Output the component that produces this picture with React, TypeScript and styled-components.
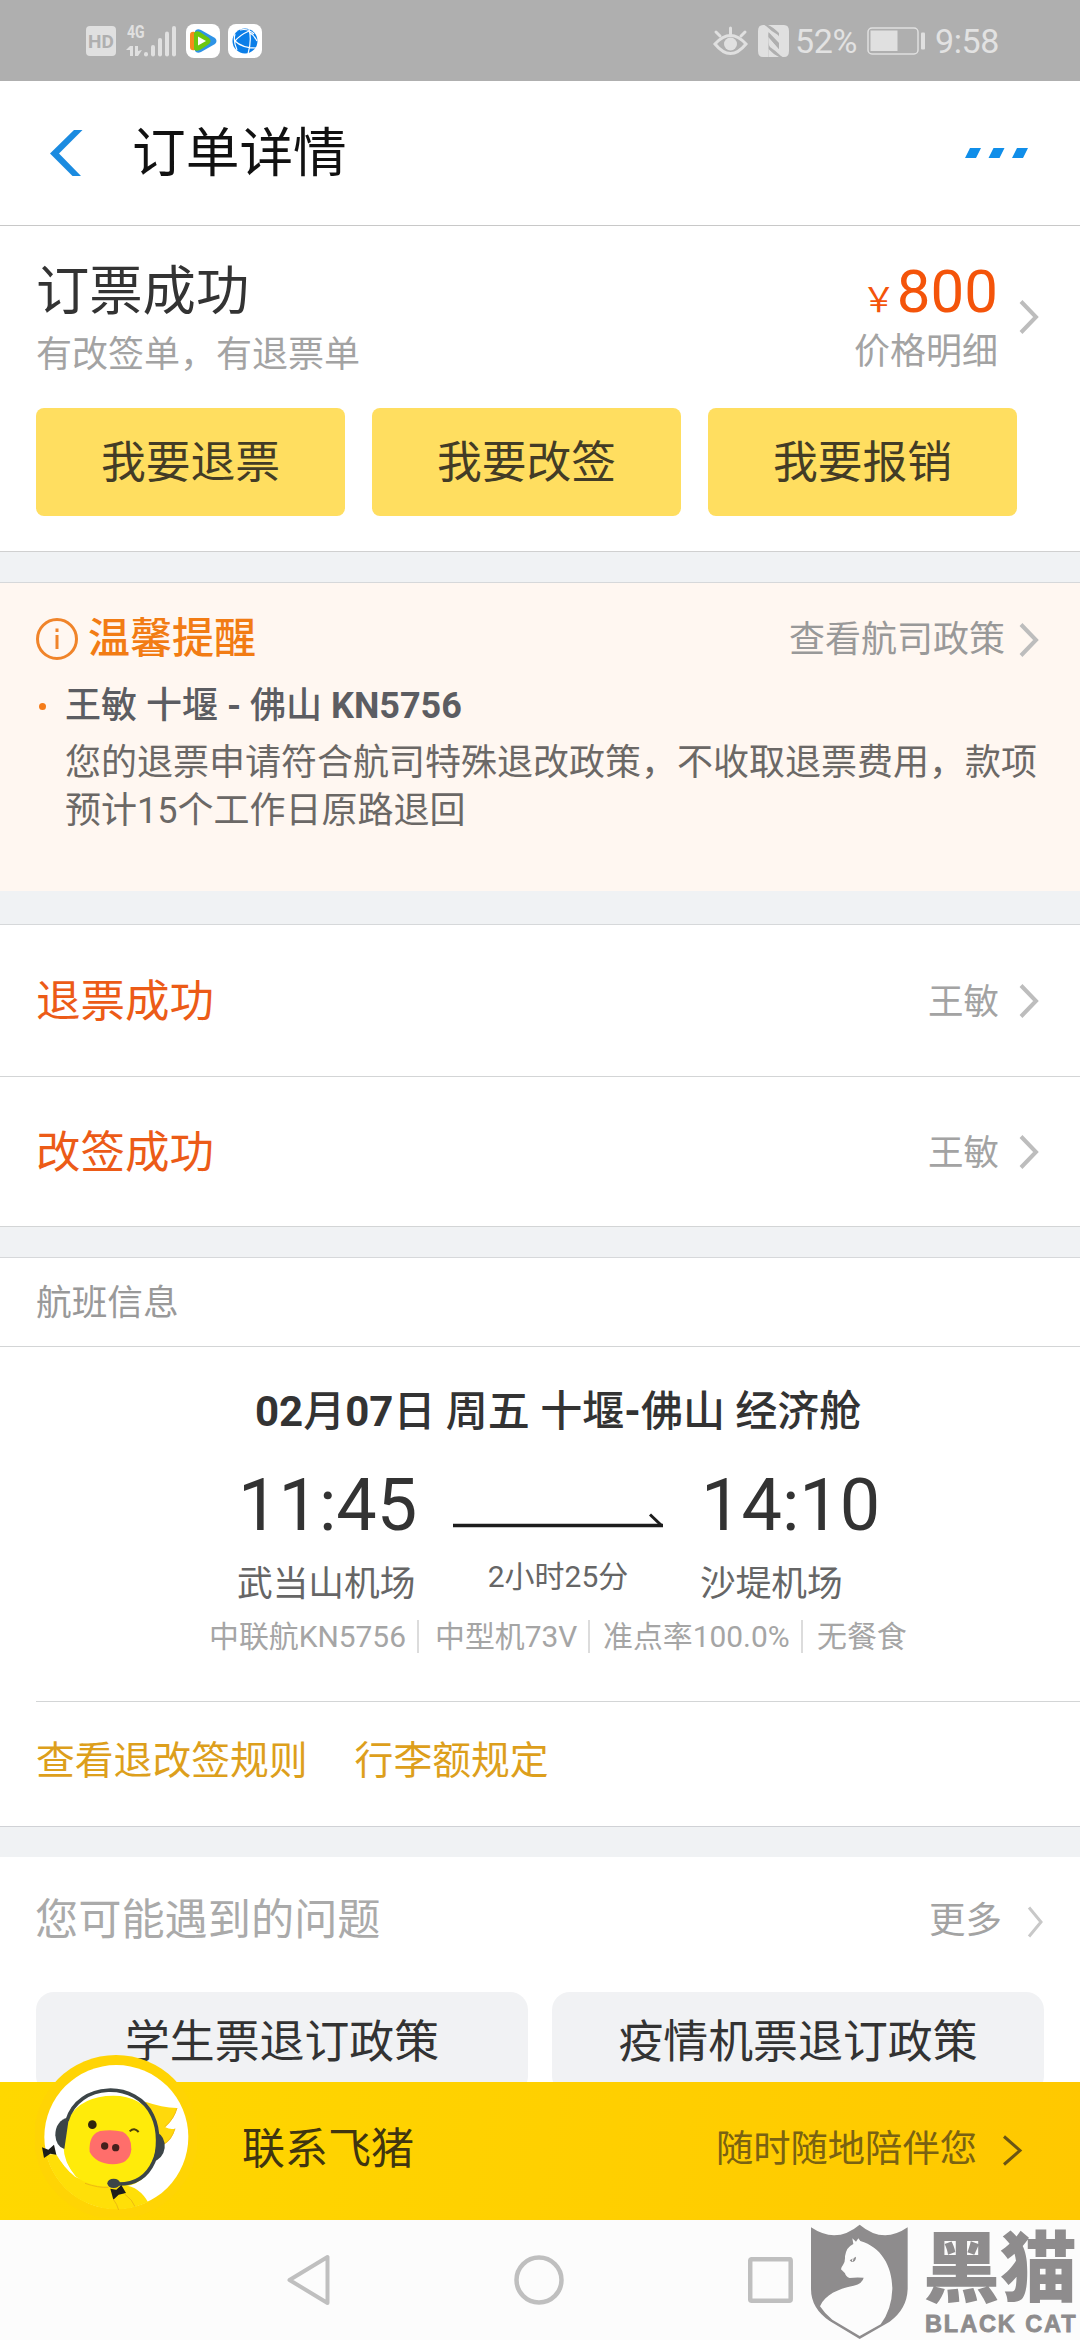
import React from "react";
import styled, { createGlobalStyle } from "styled-components";

const GlobalStyle = createGlobalStyle`
  * { box-sizing: border-box; }
  html, body { margin: 0; padding: 0; background: #fff; }
  body {
    font-family: Roboto, "Noto Sans CJK SC", sans-serif;
    color: #333;
    -webkit-font-smoothing: antialiased;
  }
`;

const Screen = styled.div`
  width: 1080px;
  height: 2340px;
  overflow: hidden;
  display: flex;
  flex-direction: column;
  background: #fff;
`;

const Text = styled.span<{ $size: number; $color?: string; $weight?: number; $lh?: number; $drop?: number }>`
  font-size: ${(p) => p.$size}px;
  line-height: ${(p) => p.$lh ?? Math.round(p.$size * 1.4)}px;
  color: ${(p) => p.$color ?? "#333"};
  font-weight: ${(p) => p.$weight ?? 400};
  padding-top: ${(p) => p.$drop ?? 0}px;
  white-space: nowrap;
  b { font-weight: 700; }
`;

/* Status bar */
const StatusBar = styled.header`
  flex: none;
  height: 81px;
  background: #afafaf;
  display: flex;
  align-items: center;
  justify-content: space-between;
  padding: 0 81px 0 86px;
`;
const StatusGroup = styled.div`
  display: flex;
  align-items: center;
  height: 100%;
`;
const HdBadge = styled.span`
  width: 30px;
  height: 30px;
  border-radius: 4px;
  background: #e0e0e0;
  color: #afafaf;
  font: 700 19px/31px Roboto, sans-serif;
  text-align: center;
  margin-right: 10px;
`;
const AppBadge = styled.span<{ $gap: number }>`
  display: flex;
  width: 34px;
  height: 34px;
  border-radius: 8px;
  background: #fff;
  margin-left: ${(p) => p.$gap}px;
`;
const Signal = styled.span`
  position: relative;
  width: 50px;
  height: 34px;
  svg { display: block; }
`;
const NetLabel = styled.span`
  position: absolute;
  left: 1px;
  top: -1px;
  font: 700 18px/18px Roboto, sans-serif;
  transform: scaleX(0.78);
  transform-origin: 0 0;
  color: #e0e0e0;
`;
const StatusText = styled.span<{ $width: number; $left: number }>`
  width: ${(p) => p.$width}px;
  margin-left: ${(p) => p.$left}px;
  font: 400 34px/40px Roboto, sans-serif;
  color: #e2e2e2;
  letter-spacing: -0.4px;
  white-space: nowrap;
`;

/* Title bar */
const TitleBar = styled.div`
  flex: none;
  height: 145px;
  border-bottom: 1px solid #c8c8c8;
  display: flex;
  align-items: center;
  padding: 0 52px 0 50px;
`;
const PageTitle = styled.h1`
  margin: 2px auto 0 49px;
  font-size: 53.7px;
  line-height: 76px;
  font-weight: 400;
  color: #111;
`;

/* Sections */
const Gap = styled.div<{ $h: number; $line?: boolean }>`
  flex: none;
  height: ${(p) => p.$h}px;
  background: #f0f2f4;
  border-bottom: ${(p) => (p.$line ? "1px solid #d6d8da" : "none")};
`;
const Row = styled.div`
  display: flex;
  align-items: center;
  justify-content: space-between;
`;
const Arrow = styled.span<{ $ml: number; $drop?: number }>`
  display: flex;
  margin-left: ${(p) => p.$ml}px;
  padding-top: ${(p) => p.$drop ?? 0}px;
`;
const Summary = styled.section`
  flex: none;
  height: 326px;
  padding: 26px 41px 0 36px;
  border-bottom: 1px solid #d0d0d0;
`;
const SummaryRow = styled(Row)`
  height: 130px;
`;
const Stack = styled.div<{ $end?: boolean }>`
  display: flex;
  flex-direction: column;
  align-items: ${(p) => (p.$end ? "flex-end" : "flex-start")};
  padding-bottom: ${(p) => (p.$end ? 6 : 0)}px;
`;
const Price = styled.div`
  display: flex;
  align-items: baseline;
  height: 76px;
  color: #f4540a;
  font-size: 60px;
  line-height: 78px;
`;
const Yen = styled.span`
  font-family: "Noto Sans CJK SC", sans-serif;
  font-size: 34px;
  line-height: 34px;
  margin-right: 1px;
`;
const Buttons = styled.div`
  display: flex;
  gap: 27px;
  margin-top: 26px;
`;
const ActionButton = styled.button`
  width: 309px;
  height: 108px;
  border: 0;
  padding: 0;
  border-radius: 8px;
  background: #ffde60;
  font: 400 44.8px/110px Roboto, "Noto Sans CJK SC", sans-serif;
  color: #433c26;
`;

/* Notice */
const Notice = styled.section`
  flex: none;
  height: 308px;
  padding: 27px 41px 0 36px;
  background: #fff7f1;
`;
const NoticeHead = styled(Row)`
  height: 58px;
`;
const Inline = styled.div`
  display: flex;
  align-items: center;
`;
const NoticeItem = styled.div`
  display: flex;
  align-items: center;
  height: 50px;
  margin-top: 13px;
`;
const Bullet = styled.i`
  width: 7px;
  height: 7px;
  border-radius: 50%;
  background: #f57c1a;
  margin: 0 19px 0 3px;
`;
const NoticeBody = styled.p`
  margin: 8px 0 0 29px;
  width: 975px;
  font-size: 36px;
  line-height: 48px;
  color: #6b6866;
`;

/* List rows */
const ListRow = styled(Row)<{ $h: number }>`
  flex: none;
  height: ${(p) => p.$h}px;
  padding: 0 41px 0 36px;
  border-bottom: 1px solid #d3d5d6;
`;

/* Flight */
const Flight = styled.section`
  flex: none;
  height: 355px;
  margin-left: 36px;
  border-bottom: 1px solid #d3d5d6;
`;
const FlightTitle = styled.h2`
  margin: 0 0 0 219px;
  padding-top: 35px;
  font-size: 42px;
  line-height: 60px;
  font-weight: 500;
  color: #333;
  white-space: nowrap;
  b { font-weight: 700; }
`;
const Legs = styled.div`
  display: grid;
  grid-template-columns: 216px 247px 200px;
  margin: 21px 0 0 201px;
`;
const Time = styled.div`
  font-size: 72px;
  line-height: 86px;
  color: #333;
  padding-left: 1px;
`;
const Airport = styled.div`
  font-size: 35.7px;
  line-height: 50px;
  color: #666;
  margin-top: 10px;
`;
const Path = styled.div`
  padding-top: 50px;
  svg { display: block; }
`;
const Duration = styled.div`
  width: 210px;
  margin-top: 26px;
  text-align: center;
  font-size: 30px;
  line-height: 44px;
  color: #666;
`;
const Facts = styled.ul`
  display: flex;
  list-style: none;
  margin: 5px 0 0 173px;
  padding: 0;
  height: 44px;
  align-items: center;
`;
const Fact = styled.li<{ $w: number; $l: number; $first?: boolean }>`
  width: ${(p) => p.$w}px;
  padding-left: ${(p) => p.$l}px;
  border-left: ${(p) => (p.$first ? "none" : "2px solid #dcdcdc")};
  font-size: 29.9px;
  line-height: 33px;
  color: #a5a5a5;
  white-space: nowrap;
`;
const Links = styled.div`
  flex: none;
  height: 125px;
  display: flex;
  gap: 47px;
  padding: 0 0 7px 36px;
  align-items: center;
  border-bottom: 1px solid #d0d2d6;
`;

/* FAQ */
const Faq = styled.section`
  flex: none;
  height: 225px;
  overflow: hidden;
`;
const FaqHead = styled(Row)`
  height: 135px;
  padding: 0 36px 8px 35px;
`;
const FaqGrid = styled.div`
  display: grid;
  grid-template-columns: 1fr 1fr;
  gap: 24px;
  padding: 0 36px;
`;
const FaqCard = styled.div`
  height: 102px;
  border-radius: 18px;
  background: #f1f2f4;
  text-align: center;
  font-size: 44.9px;
  line-height: 102px;
  color: #333;
`;

/* Contact bar */
const Contact = styled.div`
  flex: none;
  position: relative;
  height: 138px;
  padding: 0 57px 4px 242px;
  display: flex;
  align-items: center;
  justify-content: space-between;
  background: linear-gradient(100deg, #ffd800, #ffc800);
`;
const Avatar = styled.div`
  position: absolute;
  left: 35px;
  top: -27px;
  width: 162px;
  height: 162px;
`;

/* System navigation */
const NavBar = styled.nav`
  flex: none;
  position: relative;
  height: 120px;
  background: #fcfcfc;
  display: flex;
  align-items: center;
  padding-left: 287px;
  gap: 184px;
`;
const Watermark = styled.div`
  position: absolute;
  left: 811px;
  top: 4px;
  display: flex;
  color: #8e8c8d;
`;
const Brand = styled.div`
  margin-left: 14px;
  width: 155px;
`;
const BrandCn = styled.div`
  font: 900 77px/90px "Liberation Sans", "Noto Sans CJK SC", sans-serif;
  height: 88px;
  white-space: nowrap;
`;
const BrandEn = styled.div`
  font: 700 23.5px/24px "Liberation Sans", sans-serif;
  -webkit-text-stroke: 0.8px #8e8c8d;
  letter-spacing: 1.9px;
  margin-left: 2px;
  white-space: nowrap;
`;

const Chevron = ({ color = "#bdbdbd", w = 20, h = 34, sw = 4 }) => (
  <svg width={w} height={h} viewBox={`0 0 ${w} ${h}`} fill="none">
    <path d={`M2 1.5L${w - 3} ${h / 2}L2 ${h - 1.5}`} stroke={color} strokeWidth={sw} />
  </svg>
);

const SignalIcon = () => (
  <Signal>
    <NetLabel>4G</NetLabel>
    <svg width="50" height="34" viewBox="0 0 50 34" fill="#e0e0e0">
      <path d="M0 26l4-4h3v10H4v-6zM9 22h3v5l4-1-4 6H9z" />
      <rect x="18" y="28" width="4" height="4.500" rx="2" />
      <rect x="25" y="21" width="4" height="11.500" rx="2" />
      <rect x="32" y="14" width="4" height="18.500" rx="2" />
      <rect x="39" y="7.500" width="4" height="25" rx="2" />
      <rect x="46" y="2" width="4" height="30.500" rx="2" />
    </svg>
  </Signal>
);

const VideoIcon = () => (
  <svg width="34" height="34" viewBox="0 0 34 34">
    <path d="M9 7Q11 4 15 6L29 14Q32 17 29 20L15 28Q11 30 9 27Z" fill="#2e93e6" />
    <path d="M4 11Q4 7 9 8L12 9V25L9 26Q4 27 4 23Z" fill="#f58a1c" />
    <path d="M8 9Q10 6 14 8L23 14Q26 17 23 20L14 26Q8 28 8 24Z" fill="#6cc70e" />
    <path d="M12 12.500L20 17L12 21.500Z" fill="#fff" />
  </svg>
);

const GlobeIcon = () => (
  <svg width="34" height="34" viewBox="0 0 34 34" fill="none" stroke="#fff" strokeWidth="1.200">
    <circle cx="17" cy="17" r="12.500" fill="#0a7ee8" stroke="none" />
    <path d="M7 17Q12 11 21 7M7 17Q14 24 28 24M21 5Q24 16 20 30M12 6Q20 4 26 10M7 10Q5 17 9 26M21 8Q26 11 29 17" />
  </svg>
);

const EyeIcon = () => (
  <svg width="35" height="32" viewBox="0 0 35 32" fill="none" stroke="#e0e0e0" strokeWidth="3" strokeLinecap="round">
    <path d="M2 19Q17.500 2 33 19Q17.500 38 2 19Z" />
    <circle cx="17.500" cy="19" r="6.500" fill="#e0e0e0" stroke="none" />
    <path d="M17.500 3v6M3 7l4 4M32 7l-4 4" />
  </svg>
);

const NfcIcon = () => (
  <svg width="31" height="32" viewBox="0 0 31 32" fill="#e0e0e0">
    <path d="M5 0H6.500V32H5Q0 32 0 26V6Q0 0 5 0Z" />
    <path d="M26 32H24.500V0H26Q31 0 31 6V26Q31 32 26 32Z" />
    <path d="M8 1Q13 6 20 10Q22 12 22 15V19L10.500 7V32H6V0Z" />
    <path d="M23 31Q18 26 12 22Q10.500 20 10.500 17V12L21 24V0H25V32Z" />
    <path d="M10.500 8L21 20V24L10.500 12Z" fill="#afafaf" />
    <path d="M10 0H21V8Q15 2 10 0ZM10.500 24Q15 29 21 32H10.500Z" />
  </svg>
);

const BatteryIcon = () => (
  <svg width="58" height="28" viewBox="0 0 58 28">
    <rect x="1" y="1" width="50" height="26" rx="4" fill="none" stroke="#e0e0e0" strokeWidth="1.500" />
    <rect x="3.500" y="3.500" width="27" height="20.500" fill="#e0e0e0" />
    <rect x="54" y="5.500" width="4" height="17" rx="1" fill="#e0e0e0" />
  </svg>
);

const PigIcon = () => (
  <svg width="162" height="162" viewBox="105 75 486 486">
    <defs>
      <clipPath id="disc"><circle cx="349" cy="321" r="217" /></clipPath>
    </defs>
    <circle cx="348" cy="321" r="246" fill="#ffd404" />
    <circle cx="349" cy="321" r="216" fill="#fff" />
    <g clipPath="url(#disc)">
      <path d="M125 375L168 372Q190 410 225 440Q300 475 370 465Q420 470 446 520L400 560H130Z" fill="#ffdf08" />
    </g>
    <path d="M436 215Q485 232 531 234Q524 265 496 292Q511 300 525 296Q516 332 490 344L455 330Z" fill="#ffd90c" />
    <path d="M531 234Q522 268 494 290M525 296Q514 330 492 342" stroke="#f6bd16" strokeWidth="3" fill="none" />
    <path d="M205 265Q245 197 340 197Q425 197 462 265Q485 350 450 420Q415 475 345 470Q270 474 225 438Q192 400 190 345Q192 295 205 265Z" fill="#ffeb0a" />
    <path d="M172 366Q188 415 228 440Q194 400 186 358Z" fill="#fff" />
    <path d="M201 272C235 155 410 150 458 258C478 300 477 365 461 395Q430 465 350 462" fill="none" stroke="#3c4548" strokeWidth="11" />
    <path d="M207 262Q166 272 166 316Q168 350 193 357Z" fill="#3c4548" />
    <path d="M469 306Q497 320 494 354Q490 385 457 397Q474 355 469 306Z" fill="#3c4548" />
    <path d="M300 303Q335 297 368 305Q395 318 394 358Q390 403 338 403Q288 401 269 366Q265 315 300 303Z" fill="#ff6e6b" />
    <circle cx="314" cy="348" r="11" fill="#46201d" />
    <circle cx="347" cy="353" r="11" fill="#46201d" />
    <circle cx="277" cy="284" r="13" fill="#30250d" />
    <path d="M389 304Q403 290 416 306" fill="none" stroke="#4a3e0b" strokeWidth="6" />
    <ellipse cx="341" cy="460" rx="19" ry="14" fill="#3c4548" />
    <path d="M126 352L145 359L162 344L169 374L151 371L132 384ZM331 476L349 479L364 465L378 489L356 494L340 509Z" fill="#1d1d1b" />
    <path d="M340 508Q351 522 356 540M374 492Q398 510 405 530M255 460Q295 474 325 472" fill="none" stroke="#edba11" strokeWidth="3" />
  </svg>
);

const CatShield = () => (
  <svg width="98" height="116" viewBox="94 73 294 348">
    <path d="M94 83Q170 134 240 75Q310 134 384 83V268Q382 328 330 366L240 418L150 364Q94 326 94 268Z" fill="#8e8c8d" />
    <path d="M218 116L229 126L236 116L242 124C305 142 338 200 338 268Q336 330 303 374L240 409L158 360Q135 342 121 320C138 282 178 268 222 258Q249 251 252 234Q228 232 210 235Q198 231 196 221L184 209Q184 203 190 196Q197 186 196 170Q200 142 221 133Z" fill="#fcfcfc" />
    <path d="M210 182L229 171Q229 187 216 187Z" fill="#8e8c8d" />
    <path d="M221 173l-3 12" stroke="#fcfcfc" strokeWidth="3" />
  </svg>
);

const RESULTS = [
  { title: "退票成功", name: "王敏", h: 152 },
  { title: "改签成功", name: "王敏", h: 150 },
];

export default function App() {
  return (
    <>
      <GlobalStyle />
      <Screen>
        <StatusBar>
          <StatusGroup>
            <HdBadge>HD</HdBadge>
            <SignalIcon />
            <AppBadge $gap={10}><VideoIcon /></AppBadge>
            <AppBadge $gap={8}><GlobeIcon /></AppBadge>
          </StatusGroup>
          <StatusGroup>
            <EyeIcon />
            <Arrow $ml={10}><NfcIcon /></Arrow>
            <StatusText $width={64} $left={6}>52%</StatusText>
            <Arrow $ml={8}><BatteryIcon /></Arrow>
            <StatusText $width={64} $left={10}>9:58</StatusText>
          </StatusGroup>
        </StatusBar>

        <TitleBar>
          <svg width="33" height="46" viewBox="0 0 33 46" fill="#1b8be0">
            <path d="M24 0h8.500L9 23.500L31 46h-8.500L0 23.500z" />
          </svg>
          <PageTitle>订单详情</PageTitle>
          <svg width="63" height="10" viewBox="0 0 63 10" fill="#108ee9">
            <path d="M5 0h11l-5 10H0zM28.500 0h11l-5 10h-11zM52 0h11l-5 10H47z" />
          </svg>
        </TitleBar>

        <Summary>
          <SummaryRow>
            <Stack>
              <Text $size={53.3} $lh={76}>订票成功</Text>
              <Text $size={36} $color="#a3a3a3" $lh={50}>有改签单，有退票单</Text>
            </Stack>
            <Inline>
              <Stack $end>
                <Price><Yen>￥</Yen>800</Price>
                <Text $size={36} $color="#a3a3a3" $lh={46}>价格明细</Text>
              </Stack>
              <Arrow $ml={21}><Chevron /></Arrow>
            </Inline>
          </SummaryRow>
          <Buttons>
            <ActionButton>我要退票</ActionButton>
            <ActionButton>我要改签</ActionButton>
            <ActionButton>我要报销</ActionButton>
          </Buttons>
        </Summary>
        <Gap $h={31} $line />

        <Notice>
          <NoticeHead>
            <Inline>
              <svg width="42" height="42" viewBox="0 0 42 42" fill="none" stroke="#f0842a">
                <circle cx="21" cy="21" r="19.500" strokeWidth="3" />
                <path d="M21 17v14M21 10.500v3.500" strokeWidth="3" />
              </svg>
              <Arrow $ml={10}><Text $size={42} $lh={56} $color="#f27c14" $weight={500}>温馨提醒</Text></Arrow>
            </Inline>
            <Inline>
              <Text $size={36} $color="#999" $drop={2}>查看航司政策</Text>
              <Arrow $ml={14} $drop={2}><Chevron /></Arrow>
            </Inline>
          </NoticeHead>
          <NoticeItem>
            <Bullet />
            <Text $size={36} $color="#5c5d62" $weight={500}>王敏 十堰 <b>-</b> 佛山 <b>KN5756</b></Text>
          </NoticeItem>
          <NoticeBody>
            您的退票申请符合航司特殊退改政策，不收取退票费用，款项预计15个工作日原路退回
          </NoticeBody>
        </Notice>
        <Gap $h={34} $line />

        {RESULTS.map((r) => (
          <ListRow key={r.title} $h={r.h}>
            <Text $size={44.5} $color="#ec5b17" $drop={3}>{r.title}</Text>
            <Inline>
              <Text $size={35.5} $color="#a3a3a3" $drop={2}>{r.name}</Text>
              <Arrow $ml={20}><Chevron /></Arrow>
            </Inline>
          </ListRow>
        ))}
        <Gap $h={31} $line />

        <ListRow $h={89}>
          <Text $size={35.7} $color="#999" $drop={2}>航班信息</Text>
        </ListRow>
        <Flight>
          <FlightTitle><b>02</b>月<b>07</b>日 周五 十堰<b>-</b>佛山 经济舱</FlightTitle>
          <Legs>
            <div>
              <Time>11:45</Time>
              <Airport>武当山机场</Airport>
            </div>
            <Path>
              <svg width="210" height="16" viewBox="0 0 210 16" fill="none" stroke="#1d1d1d">
                <path d="M0 12.500H210" strokeWidth="3.500" />
                <path d="M197 1.500L208 12" strokeWidth="3" />
              </svg>
              <Duration>2小时25分</Duration>
            </Path>
            <div>
              <Time>14:10</Time>
              <Airport>沙堤机场</Airport>
            </div>
          </Legs>
          <Facts>
            <Fact $w={208} $l={0} $first>中联航KN5756</Fact>
            <Fact $w={171} $l={16}>中型机73V</Fact>
            <Fact $w={213} $l={13}>准点率100.0%</Fact>
            <Fact $w={110} $l={14}>无餐食</Fact>
          </Facts>
        </Flight>
        <Links>
          <Text $size={38.8} $color="#dd9f1c">查看退改签规则</Text>
          <Text $size={38.8} $color="#dd9f1c">行李额规定</Text>
        </Links>
        <Gap $h={30} />

        <Faq>
          <FaqHead>
            <Text $size={43.2} $color="#aaa" $drop={1}>您可能遇到的问题</Text>
            <Inline>
              <Text $size={36.5} $color="#a3a3a3">更多</Text>
              <Arrow $ml={25} $drop={3}><Chevron w={17} h={32} color="#c8c8c8" sw={3} /></Arrow>
            </Inline>
          </FaqHead>
          <FaqGrid>
            <FaqCard>学生票退订政策</FaqCard>
            <FaqCard>疫情机票退订政策</FaqCard>
          </FaqGrid>
        </Faq>

        <Contact>
          <Avatar><PigIcon /></Avatar>
          <Text $size={43} $color="#403510">联系飞猪</Text>
          <Inline>
            <Text $size={37.3} $color="#7a6212">随时随地陪伴您</Text>
            <Arrow $ml={25} $drop={3}><Chevron w={21} h={31} color="#6b5615" sw={3} /></Arrow>
          </Inline>
        </Contact>

        <NavBar>
          <svg width="43" height="52" viewBox="0 0 43 52" fill="none" stroke="#bfbfbf" strokeWidth="4" strokeLinejoin="round">
            <path d="M2.500 26L40.500 3V49Z" />
          </svg>
          <svg width="50" height="50" viewBox="0 0 50 50" fill="none" stroke="#bfbfbf" strokeWidth="4.500">
            <circle cx="25" cy="25" r="22.500" />
          </svg>
          <svg width="45" height="46" viewBox="0 0 45 46" fill="none" stroke="#bfbfbf" strokeWidth="4.500">
            <rect x="2.200" y="2.200" width="40.500" height="41.500" rx="1.500" />
          </svg>
          <Watermark>
            <CatShield />
            <Brand>
              <BrandCn>黑猫</BrandCn>
              <BrandEn>BLACK CAT</BrandEn>
            </Brand>
          </Watermark>
        </NavBar>
      </Screen>
    </>
  );
}
